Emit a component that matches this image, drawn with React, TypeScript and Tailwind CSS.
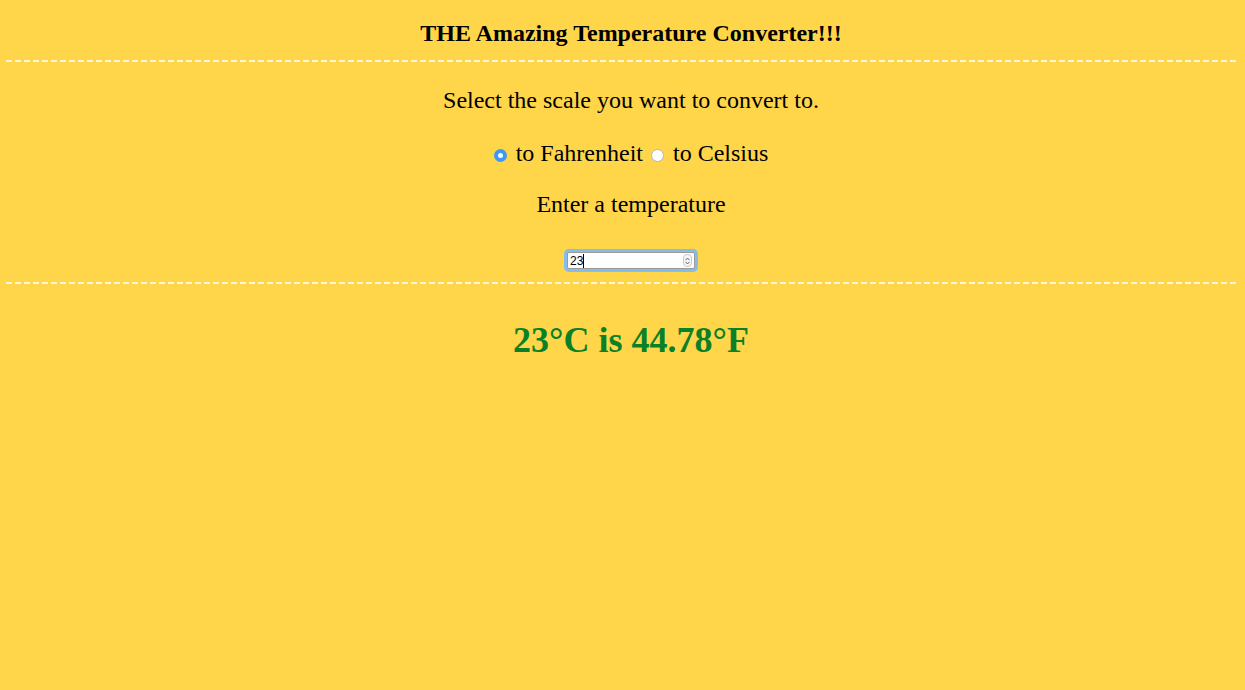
import React from 'react';

function Radio({ checked }: { checked?: boolean }) {
  return checked ? (
    <span className="inline-flex w-[13px] h-[13px] rounded-full bg-[#3b99fc] items-center justify-center">
      <span className="w-[5px] h-[5px] rounded-full bg-white" />
    </span>
  ) : (
    <span className="inline-block w-[13px] h-[13px] rounded-full bg-white border border-[#b5b5b5]" />
  );
}

function Spinner() {
  return (
    <span className="flex flex-col items-center justify-center w-[9px] h-[13px] rounded-[4px] border border-[#c8c8c8] bg-[#f7f7f7]">
      <svg width="5" height="4" viewBox="0 0 5 4">
        <path d="M0.5 3.2 L2.5 1 L4.5 3.2" fill="none" stroke="#555" strokeWidth="0.9" />
      </svg>
      <svg width="5" height="4" viewBox="0 0 5 4">
        <path d="M0.5 0.8 L2.5 3 L4.5 0.8" fill="none" stroke="#555" strokeWidth="0.9" />
      </svg>
    </span>
  );
}

function Dashes() {
  return (
    <div className="h-[2px] bg-[repeating-linear-gradient(90deg,#fcf6dc_0_6px,transparent_6px_9px)]" />
  );
}

export default function App() {
  const serif = { fontFamily: '"Liberation Serif", "Times New Roman", serif' };
  return (
    <div className="min-h-[690px] bg-[#ffd64a] text-black px-[6px]" style={serif}>
      <div className="pl-[17px] pt-[19px] text-center text-[24px] leading-[28px] font-bold">
        THE Amazing Temperature Converter!!!
      </div>
      <div className="mt-[13px]">
        <Dashes />
      </div>

      <div className="pl-[17px] mt-[24px] text-center text-[24px] leading-[28px]">
        Select the scale you want to convert to.
      </div>

      <div className="pl-[17px] mt-[25px] flex items-center justify-center text-[24px] leading-[28px]">
        <span className="mt-[4px] flex"><Radio checked /></span>
        <span className="ml-[9px]">to Fahrenheit</span>
        <span className="ml-[8px] mt-[4px] flex"><Radio /></span>
        <span className="ml-[9px]">to Celsius</span>
      </div>

      <div className="pl-[17px] mt-[23px] text-center text-[24px] leading-[28px]">
        Enter a temperature
      </div>

      <div className="pl-[17px] mt-[34px] flex justify-center">
        <div
          className="flex items-center w-[128px] h-[17px] bg-white border border-[#9a9a9a] rounded-[2px] ring-[3px] ring-[#86bbec] pl-[2px] pr-[2px]"
          style={{ fontFamily: '"Liberation Sans", Arial, sans-serif' }}
        >
          <span className="text-[12px] leading-[14px]">23</span>
          <span className="w-px h-[14px] bg-black" />
          <span className="flex-1" />
          <Spinner />
        </div>
      </div>

      <div className="mt-[13px]">
        <Dashes />
      </div>

      <div className="pl-[17px] mt-[36px] text-center text-[36px] leading-[40px] font-bold text-[#0a8027]">
        23°C is 44.78°F
      </div>
    </div>
  );
}
